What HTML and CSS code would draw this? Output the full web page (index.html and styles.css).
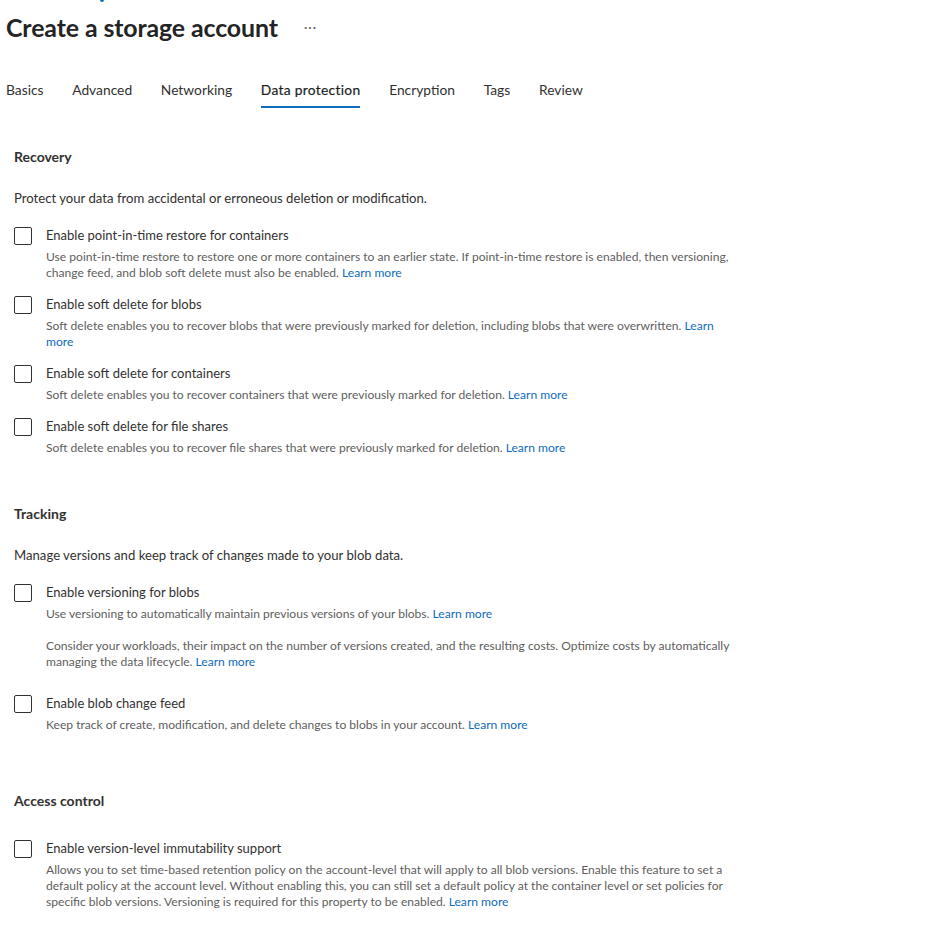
FILE: index.html
```html
<!DOCTYPE html>
<html lang="en">
<head>
<meta charset="utf-8">
<title>Create a storage account</title>
<link rel="stylesheet" href="styles.css">
</head>
<body>
<div class="page">
  <div class="crumb"><span class="crumb-tick"></span></div>
  <header class="title-row">
    <h1 class="title">Create a storage account</h1>
    <span class="more">&middot;&middot;&middot;</span>
  </header>
  <nav class="tabs">
    <span class="tab">Basics</span>
    <span class="tab">Advanced</span>
    <span class="tab">Networking</span>
    <span class="tab tab-active">Data protection</span>
    <span class="tab">Encryption</span>
    <span class="tab">Tags</span>
    <span class="tab">Review</span>
  </nav>

  <section class="section section-first">
    <h2 class="heading">Recovery</h2>
    <p class="intro">Protect your data from accidental or erroneous deletion or modification.</p>
    <div class="rows">
      <div class="row">
        <span class="box"></span>
        <div class="row-body">
          <div class="label">Enable point-in-time restore for containers</div>
          <p class="desc">Use point-in-time restore to restore one or more containers to an earlier state. If point-in-time restore is enabled, then versioning, change feed, and blob soft delete must also be enabled. <a class="link" href="#">Learn more</a></p>
        </div>
      </div>
      <div class="row">
        <span class="box"></span>
        <div class="row-body">
          <div class="label">Enable soft delete for blobs</div>
          <p class="desc">Soft delete enables you to recover blobs that were previously marked for deletion, including blobs that were overwritten. <a class="link" href="#">Learn more</a></p>
        </div>
      </div>
      <div class="row">
        <span class="box"></span>
        <div class="row-body">
          <div class="label">Enable soft delete for containers</div>
          <p class="desc">Soft delete enables you to recover containers that were previously marked for deletion. <a class="link" href="#">Learn more</a></p>
        </div>
      </div>
      <div class="row">
        <span class="box"></span>
        <div class="row-body">
          <div class="label">Enable soft delete for file shares</div>
          <p class="desc">Soft delete enables you to recover file shares that were previously marked for deletion. <a class="link" href="#">Learn more</a></p>
        </div>
      </div>
    </div>
  </section>

  <section class="section">
    <h2 class="heading">Tracking</h2>
    <p class="intro">Manage versions and keep track of changes made to your blob data.</p>
    <div class="rows">
      <div class="row">
        <span class="box"></span>
        <div class="row-body">
          <div class="label">Enable versioning for blobs</div>
          <p class="desc">Use versioning to automatically maintain previous versions of your blobs. <a class="link" href="#">Learn more</a></p>
          <p class="desc desc-extra">Consider your workloads, their impact on the number of versions created, and the resulting costs. Optimize costs by automatically managing the data lifecycle. <a class="link" href="#">Learn more</a></p>
        </div>
      </div>
      <div class="row">
        <span class="box"></span>
        <div class="row-body">
          <div class="label">Enable blob change feed</div>
          <p class="desc">Keep track of create, modification, and delete changes to blobs in your account. <a class="link" href="#">Learn more</a></p>
        </div>
      </div>
    </div>
  </section>

  <section class="section section-access">
    <h2 class="heading heading-solo">Access control</h2>
    <div class="rows">
      <div class="row">
        <span class="box"></span>
        <div class="row-body">
          <div class="label">Enable version-level immutability support</div>
          <p class="desc">Allows you to set time-based retention policy on the account-level that will apply to all blob versions. Enable this feature to set a default policy at the account level. Without enabling this, you can still set a default policy at the container level or set policies for specific blob versions. Versioning is required for this property to be enabled. <a class="link" href="#">Learn more</a></p>
        </div>
      </div>
    </div>
  </section>
</div>
</body>
</html>
```
FILE: styles.css
```css
* { box-sizing: border-box; }
html, body { margin: 0; padding: 0; background: #ffffff; }
body {
  font-family: Lato, "Liberation Sans", sans-serif;
  color: #323130;
  -webkit-font-smoothing: antialiased;
}
.page { padding: 0 0 40px 6px; }

.crumb { height: 3px; overflow: hidden; }
.crumb-tick {
  display: block;
  width: 4px;
  height: 2px;
  margin-left: 94px;
  background: #0f6cbd;
  border-radius: 0 0 2px 2px;
}

.title-row {
  display: flex;
  align-items: center;
  gap: 26px;
  margin-top: 8px;
  height: 32px;
}
.title {
  margin: 0;
  font-size: 24.9px;
  line-height: 32px;
  font-weight: 700;
  color: #242424;
  letter-spacing: -0.1px;
}
.more {
  font-size: 13px;
  color: #605e5c;
  letter-spacing: 1px;
  line-height: 32px;
}

.tabs {
  display: flex;
  gap: 28.7px;
  margin-top: 29px;
}
.tab {
  font-size: 13.8px;
  line-height: 20px;
  padding: 8px 0 6px;
  color: #323130;
  border-bottom: 2px solid transparent;
}
.tab-active {
  color: #201f1e;
  border-bottom: 2.5px solid #0f6cbd;
  letter-spacing: 0.3px;
  -webkit-text-stroke: 0.2px #201f1e;
}

.section { padding-left: 8px; margin-top: 48px; }
.section-first { margin-top: 39px; }
.section-access { margin-top: 58px; }

.heading {
  margin: 0;
  font-size: 14px;
  line-height: 20px;
  font-weight: 700;
  color: #323130;
}
.heading-solo { margin-bottom: 27px; }

.intro {
  margin: 21px 0 17px;
  font-size: 13.15px;
  line-height: 20px;
  color: #323130;
}

.rows { display: flex; flex-direction: column; gap: 13px; }
.row { display: flex; align-items: flex-start; gap: 14px; }
.box {
  flex: none;
  width: 18px;
  height: 18px;
  margin-top: 2px;
  border: 1px solid #323130;
  border-radius: 2px;
  background: #fff;
}
.row-body { max-width: 692px; }
.label {
  font-size: 13px;
  line-height: 20px;
  color: #323130;
}
.desc {
  margin: 4px 0 0;
  font-size: 12.08px;
  line-height: 16px;
  color: #605e5c;
}
.desc-extra { margin: 16px 0 10px; }
.link { color: #0f6cbd; text-decoration: none; }
```
